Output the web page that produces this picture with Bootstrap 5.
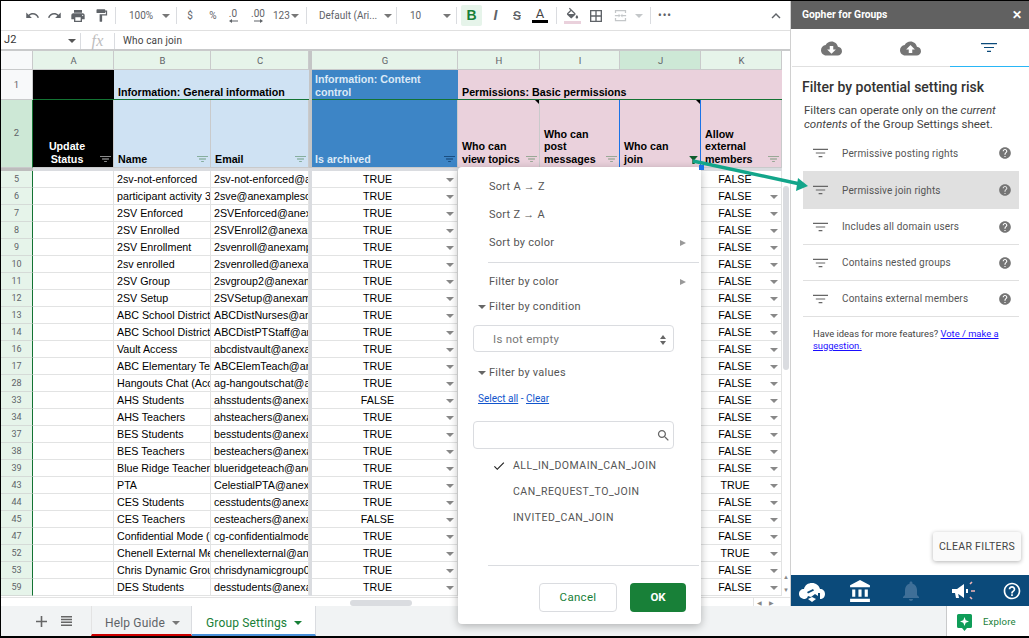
<!DOCTYPE html>
<html lang="en"><head><meta charset="utf-8"><title>Group Settings</title>
<link href="https://cdn.jsdelivr.net/npm/bootstrap@5.3.0/dist/css/bootstrap.min.css" rel="stylesheet">
<style>
html,body{margin:0;width:1029px;height:638px;overflow:hidden;background:#fff}
body{font-family:Roboto,"Liberation Sans",sans-serif;color:#444}
.pagewrap{width:1029px;height:638px}
.appframe{width:1029px;height:638px;border-top:1px solid #000;border-left:1px solid #000;border-bottom:2px solid #000}
.toprow{height:605px}
.leftpane{width:789px;flex:none}
.tbar{height:31px;border-bottom:1px solid #e0e0e0;padding-left:21px;font-size:10px;color:#5f6368}
.tbar svg{fill:#5f6368;display:block}
.ti{flex:none;display:flex;align-items:center;justify-content:center;height:22px}
.tl{justify-content:flex-start}
.tsep{flex:none;width:1px;height:17px;background:#dadce0}
.caret{display:inline-block;border-left:4px solid transparent;border-right:4px solid transparent;border-top:4px solid #777}
.w3{width:3px}.w8{width:8px}.w18{width:18px}.w20{width:20px}.w22{width:22px}.w24{width:24px}.w26{width:26px}.w28{width:28px}.w30{width:30px}.w33{width:33px}
.zoomb{width:60px;padding-left:13px;gap:9px}
.numb{gap:1px}
.fontb{width:89px;padding-left:12px;gap:7px}
.sizeb{width:59px;padding-left:13px;gap:22px}
.decb{flex-direction:column;line-height:9px;gap:1px}
.bbtn{width:21px;height:21px;margin-left:4px;background:#e6f4ea;color:#188038;font-weight:700;font-size:14px;border-radius:2px;font-family:"Liberation Sans",sans-serif}
.ibtn{width:25px;margin-left:1px;font-family:"Liberation Sans",sans-serif;font-style:italic;font-weight:700;font-size:14px}
.sbtn{font-size:13px;font-weight:500;text-decoration:line-through}
.abtn{width:28px;font-size:13px;line-height:12px;flex-direction:column;color:#444}
.abar{display:block;width:16px;height:3px;background:#000}
.fillbar{display:block;width:17px;height:3px;background:#ead1dc}
.fillb{flex-direction:column}
.ms2px{margin-left:2px}.ms7px{margin-left:7px}
.merge svg{fill:#c4c7c9}
.caretdim{border-top-color:#c4c7c9}
.dots{font-weight:700;font-size:10px;letter-spacing:1px}
.fbar{height:20px;padding-top:1px;border-bottom:2px solid #c9cacb;font-size:10px;color:#444;letter-spacing:.15px}
.fcell{width:79px;padding-left:3px;padding-right:4px;font-size:11px;color:#333}
.fcell .caret{border-top-color:#555}
.fdiv{width:1px;height:16px;background:#dadce0}
.fxlab{width:33px;text-align:center;font-family:"Liberation Serif",serif;font-style:italic;font-size:16px;color:#bdbdbd}
.fval{margin-left:8px}
.sgrid{table-layout:fixed;border-collapse:separate;border-spacing:0;width:781px;font-family:"Liberation Sans",Arial,sans-serif;font-size:10.7px;color:#000}
.c0{width:32px}.c1{width:81px}.c2{width:97px}.c3{width:98px}.c4{width:3px}.c5{width:146px}.c6{width:82px}.c7{width:80px}.c8{width:81px}.c9{width:81px}
.sgrid td,.sgrid th{padding:0 3px;white-space:nowrap;overflow:hidden;border-right:1px solid #e2e3e3;border-bottom:1px solid #e2e3e3;height:17px;line-height:15px;font-weight:400;position:relative}
.sgrid .rh{padding:0;text-align:center;font-family:Roboto,sans-serif;font-size:9px;color:#5f6368;background:#e6f4ea;border-right:1px solid #137333;border-bottom:1px solid #d5dbd7}
.sgrid .colh{height:19px;padding:0 0 0 1px;text-align:center;font-family:Roboto,sans-serif;font-size:9.5px;color:#5f6368;background:#e6f4ea;border-right:1px solid #c9cacb;border-bottom:1px solid #c9cacb}
.sgrid .colh.seldark{background:#cde8d6}
.sgrid .corner{background:#f8f9fa;border-right:1px solid #c9cacb;border-bottom:1px solid #c9cacb;padding:0}
.sgrid .fz{padding:0;background:#dadce0;border:0}
.sgrid .fz.fzh{background:#c4c5c6}
.sgrid .ctr{padding:0 14px 0 0;text-align:center}
.sgrid tr>.ctr:last-child{padding-right:12px}
.sgrid .ctr::after{content:"";position:absolute;right:3px;top:7px;border-left:4px solid transparent;border-right:4px solid transparent;border-top:4px solid #888}
.sgrid .ctr.nc::after{display:none}
.sgrid .r1 td,.sgrid .r1 th{height:30px;vertical-align:bottom;white-space:normal;font-weight:700;font-size:10.7px;line-height:13px;padding:0 3px 0 4px;border-right:0;border-bottom:1px solid #137333}
.sgrid .r1 .rh{background:#f8f9fa;font-weight:400;vertical-align:middle;border-right:1px solid #c9cacb;border-bottom:1px solid #c9cacb;font-size:9.5px;padding:0}
.sgrid .r2 td,.sgrid .r2 th{height:68px;vertical-align:bottom;font-weight:700;font-size:10.7px;line-height:12.5px;white-space:normal;padding:0 3px 2px 4px;border-right:1px solid #c9cacb;border-bottom:1px solid #c9cacb}
.sgrid .r1 td.bgg,.sgrid .r2 td.bgg{padding-left:3px}
.sgrid .r1 .fz,.sgrid .r2 .fz{padding:0;border:0}
.sgrid .r2 .rh{background:#cde8d6;font-weight:400;vertical-align:middle;border-right:1px solid #137333;font-size:9.5px;padding:0}
.sgrid .r3 td,.sgrid .r3 th{height:3px;padding:0;background:#dadce0;border:0;line-height:0;font-size:0}
.sgrid .r3 .rh{background:#bdbdbd}
.bgk{background:#000;color:#fff}
.sgrid .bgb{background:#cfe2f3}
.sgrid .bgg{background:#3d85c6;color:#dbe9f6}
.sgrid .bgp{background:#ead1dc}
.sgrid .r2 .bka{background:#000;color:#fff;text-align:center;padding-right:16px}
.ficon{position:absolute;right:2px;bottom:4px;display:block}
.sgrid .r2 .selL{border-right:1px solid #1a73e8}
.notec::before{content:"";position:absolute;top:0;right:0;border-top:4px solid #000;border-left:4px solid transparent}
.vtrack{width:8px;flex:none;position:relative}
.vthumb{width:6px;height:184px;background:#dadce0;border-radius:3px;margin:135px 0 0 1px}
.varr{height:13px;font-size:6px;text-align:center;color:#888;line-height:13px}
.hbar{height:9px;margin-top:1px;border-top:1px solid #e3e3e3}
.hthumb{width:62px;height:6px;background:#dadce0;border-radius:3px;margin:2px 0 0 349px}
.harr{margin-left:auto;margin-right:9px;font-size:6px;color:#888;letter-spacing:7px;line-height:9px;border-left:1px solid #e3e3e3;padding-left:3px}
.tabsbar{height:30px;background:#f1f3f4;font-size:12px;letter-spacing:.15px;color:#5f6368}
.addb{width:90px;padding-left:35px;gap:14px}
.sheettab{height:30px;padding:5px 0 0 14px;border-right:1px solid #dadce0;gap:7px;flex:none}
.sheettab.t1{width:101px;padding-left:13px;border-bottom:2px solid #c00;border-left:1px solid #e3e3e3}
.sheettab.t2{width:124px;background:#fff;color:#188038;border-bottom:2px solid #4a90d9}
.sheettab.t2 .caret{border-top-color:#188038}
.explore{margin-left:auto;width:83px;height:30px;background:#fff;border-left:1px solid #c9cacb;color:#188038;font-size:9.6px;padding:2px 0 0 10px;gap:11px}
.gpanel{width:239px;flex:none;border-left:1px solid #d0d0d0}
.ghead{height:28px;background:#616161;color:#fff;font-weight:700;font-size:10.3px;padding:0 7px 0 11px}
.gclose{font-size:12px;font-weight:700;line-height:1}
.gtabs{height:38px;border-bottom:1px solid #e0e0e0;margin-left:1px}
.gtab{height:38px}
.gtab.on{border-bottom:1px solid #29b6f6}
.gbody{padding:0 10px 0 12px;flex:1 1 0}
.gtitle{font-size:14px;font-weight:500;color:#333;margin:9px 0 0 -1px;line-height:22px}
.gtext{font-size:11.5px;line-height:14px;color:#444;margin:5px 0 4px 1px}
.glist{width:216px}
.glist .list-group-item{height:36px;padding:0 7px 0 10px;border:0;border-bottom:1px solid #e0e0e0;border-radius:0;font-size:10px;letter-spacing:.15px;color:#555;background:transparent}
.glist .list-group-item.first{border-bottom:0}
.glist .list-group-item.act{height:38px;background:#e0e0e0;border-bottom:0}
.glist .ltext{margin-left:14px}
.glist .list-group-item .hp{margin-left:auto;fill:#757575;flex:none}
.gnote{font-size:9.4px;line-height:12px;color:#444;margin:11px 0 0 10px}
.gnote a{color:#1a0dff}
.clearb{align-self:flex-end;width:88px;height:29px;padding:0;margin:auto -2px 14px 0;background:#fafafa;border:0;border-radius:3px;font-size:10.5px;letter-spacing:.3px;color:#444;box-shadow:0 1px 4px rgba(0,0,0,.3)}
.gfoot{height:31px;background:#0b4a7a;padding:0 0 0 7px}
.fi2{margin-left:22px}.fi3{margin-left:27px}.fi4{margin-left:28px}.fi5{margin-left:27px}
.fpop{position:absolute;left:458px;top:167px;width:243px;height:457px;background:#fff;border-radius:4px;box-shadow:0 2px 8px rgba(0,0,0,.28);padding-top:5px;font-size:11px;letter-spacing:.25px;color:#555}
.pitem{height:28px;padding:2px 15px 0 31px}
.pline{height:1px;background:#dadce0;margin-left:30px;margin-right:2px}
.pl1{margin-top:6px;margin-bottom:4px}
.pl2{margin-top:35px}
.tri{width:0;border-top:3px solid transparent;border-bottom:3px solid transparent;border-left:6px solid #999;margin-left:auto}
.psub{height:22px;padding:2px 0 0 20px;gap:3px}
.psub.gap9{margin-top:9px}
.psub .caret{border-top-color:#666}
.pselect{width:201px;height:27px;margin:8px 0 0 15px;border:1px solid #dadce0;border-radius:4px;padding:2px 7px 0 19px;font-size:11.5px;color:#777}
.updown{display:flex;flex-direction:column;gap:2px;margin-left:auto}
.updown i{display:block;border-left:3px solid transparent;border-right:3px solid transparent}
.updown i.u{border-bottom:4px solid #666}
.updown i.d{border-top:4px solid #666}
.plinks{height:20px;margin-top:5px;padding-left:20px;font-size:10px;letter-spacing:0;color:#1155cc}
.plinks a{color:#1155cc}
.psearch{width:201px;height:28px;margin:13px 0 3px 15px;border:1px solid #dadce0;border-radius:4px;padding-right:2px}
.pval{height:26px;padding:2px 0 0 55px;font-size:10.5px;letter-spacing:.5px;color:#555;position:relative}
.pval svg{position:absolute;left:34px;top:7px}
.pbtns{margin-top:17px;padding-right:15px;gap:13px}
.bcancel{width:78px;height:29px;padding:0;border:1px solid #dadce0;border-radius:4px;background:#fff;font-size:11.5px;color:#188038;font-weight:400;letter-spacing:.3px}
.bok{width:56px;height:29px;padding:0;border:0;border-radius:4px;background:#188038;color:#fff;font-size:11.5px;font-weight:700}
.bhandle{position:absolute;left:699px;top:165px;width:5px;height:5px;background:#1a73e8;z-index:3}
.jmark{position:absolute;left:689px;top:156px;z-index:3}
.arrowsv{position:absolute;left:0;top:0;z-index:4;pointer-events:none}
</style></head><body>
<svg width="0" height="0" class="position-absolute"><defs>
<symbol id="flt" viewBox="0 0 16 10"><path d="M0 .5h16v1.2H0zM3 4.400h10v1.200H3zM6 8.300h4v1.200H6z"/></symbol>
<symbol id="hlp" viewBox="0 0 24 24"><path d="M12 2C6.480 2 2 6.480 2 12s4.480 10 10 10 10-4.480 10-10S17.520 2 12 2zm1 17h-2v-2h2v2zm2.070-7.750l-.9.92C13.450 12.900 13 13.500 13 15h-2v-.5c0-1.100.45-2.100 1.170-2.830l1.240-1.260c.37-.36.59-.86.59-1.410 0-1.100-.9-2-2-2s-2 .9-2 2H8c0-2.210 1.790-4 4-4s4 1.790 4 4c0 .88-.36 1.680-.93 2.250z"/></symbol>
</defs></svg>
<div class="pagewrap position-relative">
<div class="appframe d-flex flex-column">
<div class="d-flex toprow">
<div class="leftpane d-flex flex-column">
<div class="tbar d-flex align-items-center">
<span class="ti w20"><svg width="15" height="15" viewBox="0 0 24 24"><path d="M12.500 8c-2.650 0-5.050.99-6.900 2.600L2 7v9h9l-3.620-3.620c1.390-1.160 3.160-1.880 5.120-1.880 3.540 0 6.550 2.310 7.600 5.500l2.370-.78C21.080 11.030 17.150 8 12.500 8z"/></svg></span>
<span class="ti w24"><svg width="15" height="15" viewBox="0 0 24 24"><path d="M18.400 10.600C16.550 8.990 14.150 8 11.500 8c-4.650 0-8.580 3.030-9.960 7.220L3.900 16c1.050-3.190 4.050-5.500 7.600-5.500 1.950 0 3.730.72 5.120 1.880L13 16h9V7l-3.600 3.600z"/></svg></span>
<span class="ti w24"><svg width="16" height="16" viewBox="0 0 24 24"><path d="M19 8H5c-1.660 0-3 1.340-3 3v6h4v4h12v-4h4v-6c0-1.660-1.340-3-3-3zm-3 11H8v-5h8v5zm3-7c-.55 0-1-.45-1-1s.45-1 1-1 1 .45 1 1-.45 1-1 1zm-1-9H6v4h12V3z"/></svg></span>
<span class="ti w22"><svg width="15" height="15" viewBox="0 0 24 24"><path d="M18 4V3c0-.55-.45-1-1-1H5c-.55 0-1 .45-1 1v4c0 .55.45 1 1 1h12c.55 0 1-.45 1-1V6h1v4H9v11c0 .55.45 1 1 1h2c.55 0 1-.45 1-1v-9h8V4h-3z"/></svg></span>
<span class="ti w3"></span><span class="tsep"></span>
<span class="ti tl zoomb">100%<i class="caret"></i></span><span class="tsep"></span>
<span class="ti w26">$</span><span class="ti w20">%</span>
<span class="ti w20 decb">.0<svg width="9" height="4" viewBox="0 0 9 4"><path d="M0 2l3-2v1.500h6v1H3V4z"/></svg></span>
<span class="ti w30 decb">.00<svg width="9" height="4" viewBox="0 0 9 4"><path d="M9 2L6 0v1.500H0v1h6V4z"/></svg></span>
<span class="ti tl w33 numb">123<i class="caret"></i></span><span class="tsep"></span>
<span class="ti tl fontb">Default (Ari...<i class="caret"></i></span><span class="tsep"></span>
<span class="ti tl sizeb">10<i class="caret"></i></span><span class="tsep"></span>
<span class="ti bbtn">B</span>
<span class="ti ibtn">I</span>
<span class="ti w18 sbtn">S</span>
<span class="ti abtn">A<i class="abar"></i></span>
<span class="tsep ms2px"></span>
<span class="ti w30 fillb"><svg width="15" height="14" viewBox="0 0 24 20"><path d="M16.560 8.940L7.620 0 6.210 1.410l2.380 2.380-5.150 5.150c-.59.59-.59 1.540 0 2.120l5.500 5.500c.29.29.68.44 1.060.44s.77-.15 1.060-.44l5.500-5.500c.59-.58.59-1.530 0-2.120zM5.210 10L10 5.210 14.790 10H5.210zM19 11.500s-2 2.170-2 3.500c0 1.100.9 2 2 2s2-.9 2-2c0-1.330-2-3.500-2-3.500z"/></svg><i class="fillbar"></i></span>
<span class="ti w18"><svg width="16" height="16" viewBox="0 0 24 24"><path d="M3 3v18h18V3H3zm8 16H5v-6h6v6zm0-8H5V5h6v6zm8 8h-6v-6h6v6zm0-8h-6V5h6v6z"/></svg></span>
<span class="ti w30 merge"><svg width="15" height="15" viewBox="0 0 24 24"><path d="M3 3h18v5h-2V5H5v3H3zM3 16h2v3h14v-3h2v5H3zM3 11h6V9l3 3-3 3v-2H3zM21 11h-6V9l-3 3 3 3v-2h6z"/></svg></span>
<span class="ti w8"><i class="caret caretdim"></i></span>
<span class="tsep ms7px"></span>
<span class="ti w28 dots">&#8226;&#8226;&#8226;</span>
<span class="ti ms-auto w28"><svg width="18" height="18" viewBox="0 0 24 24"><path d="M7.410 15.410L12 10.830l4.590 4.580L18 14l-6-6-6 6z"/></svg></span>
</div>
<div class="fbar d-flex align-items-center">
<span class="fcell d-flex align-items-center justify-content-between">J2<i class="caret"></i></span>
<span class="fdiv"></span><span class="fxlab">fx</span><span class="fdiv"></span>
<span class="fval">Who can join</span>
</div>
<div class="d-flex">
<table class="sgrid">
<colgroup><col class="c0"><col class="c1"><col class="c2"><col class="c3"><col class="c4"><col class="c5"><col class="c6"><col class="c7"><col class="c8"><col class="c9"></colgroup>
<tr><td class="corner"></td><td class="colh">A</td><td class="colh">B</td><td class="colh">C</td><td class="fz fzh"></td><td class="colh">G</td><td class="colh">H</td><td class="colh">I</td><td class="colh seldark">J</td><td class="colh">K</td></tr>
<tr class="r1"><th class="rh">1</th><td class="bgk"></td><td class="bgb" colspan="2">Information: General information</td><td class="fz fzh"></td><td class="bgg">Information: Content control</td><td class="bgp" colspan="4">Permissions: Basic permissions</td></tr>
<tr class="r2"><th class="rh">2</th>
<td class="bka">Update Status<svg class="ficon" width="11" height="8" fill="#bbb"><use href="#flt"/></svg></td>
<td class="bgb">Name<svg class="ficon" width="11" height="8" fill="#6f9d83"><use href="#flt"/></svg></td>
<td class="bgb">Email<svg class="ficon" width="11" height="8" fill="#6f9d83"><use href="#flt"/></svg></td>
<td class="fz fzh"></td>
<td class="bgg">Is archived<svg class="ficon" width="11" height="8" fill="#0f3d6b"><use href="#flt"/></svg></td>
<td class="bgp notec">Who can<br>view topics<svg class="ficon" width="11" height="8" fill="#7f9a7f"><use href="#flt"/></svg></td>
<td class="bgp selL">Who can<br>post<br>messages<svg class="ficon" width="11" height="8" fill="#7f9a7f"><use href="#flt"/></svg></td>
<td class="bgp notec selL">Who can<br>join</td>
<td class="bgp">Allow<br>external<br>members<svg class="ficon" width="11" height="8" fill="#7f9a7f"><use href="#flt"/></svg></td></tr>
<tr class="r3"><td class="rh"></td><td colspan="3"></td><td></td><td></td><td colspan="4"></td></tr>
<tr><th class="rh">5</th><td></td><td>2sv-not-enforced</td><td>2sv-not-enforced@anexample.com</td><td class="fz"></td><td class="ctr">TRUE</td><td></td><td></td><td></td><td class="ctr nc">FALSE</td></tr>
<tr><th class="rh">6</th><td></td><td>participant activity 3 group</td><td>2sve@anexamplesch.com</td><td class="fz"></td><td class="ctr">TRUE</td><td></td><td></td><td></td><td class="ctr">FALSE</td></tr>
<tr><th class="rh">7</th><td></td><td>2SV Enforced</td><td>2SVEnforced@anexample.com</td><td class="fz"></td><td class="ctr">TRUE</td><td></td><td></td><td></td><td class="ctr">FALSE</td></tr>
<tr><th class="rh">8</th><td></td><td>2SV Enrolled</td><td>2SVEnroll2@anexample.com</td><td class="fz"></td><td class="ctr">TRUE</td><td></td><td></td><td></td><td class="ctr">FALSE</td></tr>
<tr><th class="rh">9</th><td></td><td>2SV Enrollment</td><td>2svenroll@anexample.com</td><td class="fz"></td><td class="ctr">TRUE</td><td></td><td></td><td></td><td class="ctr">FALSE</td></tr>
<tr><th class="rh">10</th><td></td><td>2sv enrolled</td><td>2svenrolled@anexample.com</td><td class="fz"></td><td class="ctr">TRUE</td><td></td><td></td><td></td><td class="ctr">FALSE</td></tr>
<tr><th class="rh">11</th><td></td><td>2SV Group</td><td>2svgroup2@anexample.com</td><td class="fz"></td><td class="ctr">TRUE</td><td></td><td></td><td></td><td class="ctr">FALSE</td></tr>
<tr><th class="rh">12</th><td></td><td>2SV Setup</td><td>2SVSetup@anexample.com</td><td class="fz"></td><td class="ctr">TRUE</td><td></td><td></td><td></td><td class="ctr">FALSE</td></tr>
<tr><th class="rh">13</th><td></td><td>ABC School District Nurses</td><td>ABCDistNurses@anexample.com</td><td class="fz"></td><td class="ctr">TRUE</td><td></td><td></td><td></td><td class="ctr">FALSE</td></tr>
<tr><th class="rh">14</th><td></td><td>ABC School District PT Staff</td><td>ABCDistPTStaff@anexample.com</td><td class="fz"></td><td class="ctr">TRUE</td><td></td><td></td><td></td><td class="ctr">FALSE</td></tr>
<tr><th class="rh">16</th><td></td><td>Vault Access</td><td>abcdistvault@anexample.com</td><td class="fz"></td><td class="ctr">TRUE</td><td></td><td></td><td></td><td class="ctr">FALSE</td></tr>
<tr><th class="rh">17</th><td></td><td>ABC Elementary Teachers</td><td>ABCElemTeach@anexample.com</td><td class="fz"></td><td class="ctr">TRUE</td><td></td><td></td><td></td><td class="ctr">FALSE</td></tr>
<tr><th class="rh">28</th><td></td><td>Hangouts Chat (Accounts)</td><td>ag-hangoutschat@anexample.com</td><td class="fz"></td><td class="ctr">TRUE</td><td></td><td></td><td></td><td class="ctr">FALSE</td></tr>
<tr><th class="rh">33</th><td></td><td>AHS Students</td><td>ahsstudents@anexample.com</td><td class="fz"></td><td class="ctr">FALSE</td><td></td><td></td><td></td><td class="ctr">FALSE</td></tr>
<tr><th class="rh">34</th><td></td><td>AHS Teachers</td><td>ahsteachers@anexample.com</td><td class="fz"></td><td class="ctr">TRUE</td><td></td><td></td><td></td><td class="ctr">FALSE</td></tr>
<tr><th class="rh">37</th><td></td><td>BES Students</td><td>besstudents@anexample.com</td><td class="fz"></td><td class="ctr">TRUE</td><td></td><td></td><td></td><td class="ctr">FALSE</td></tr>
<tr><th class="rh">38</th><td></td><td>BES Teachers</td><td>besteachers@anexample.com</td><td class="fz"></td><td class="ctr">TRUE</td><td></td><td></td><td></td><td class="ctr">FALSE</td></tr>
<tr><th class="rh">39</th><td></td><td>Blue Ridge Teachers</td><td>blueridgeteach@anexample.com</td><td class="fz"></td><td class="ctr">TRUE</td><td></td><td></td><td></td><td class="ctr">FALSE</td></tr>
<tr><th class="rh">43</th><td></td><td>PTA</td><td>CelestialPTA@anexample.com</td><td class="fz"></td><td class="ctr">TRUE</td><td></td><td></td><td></td><td class="ctr">TRUE</td></tr>
<tr><th class="rh">44</th><td></td><td>CES Students</td><td>cesstudents@anexample.com</td><td class="fz"></td><td class="ctr">TRUE</td><td></td><td></td><td></td><td class="ctr">FALSE</td></tr>
<tr><th class="rh">45</th><td></td><td>CES Teachers</td><td>cesteachers@anexample.com</td><td class="fz"></td><td class="ctr">FALSE</td><td></td><td></td><td></td><td class="ctr">FALSE</td></tr>
<tr><th class="rh">47</th><td></td><td>Confidential Mode (test)</td><td>cg-confidentialmode@anexample.com</td><td class="fz"></td><td class="ctr">TRUE</td><td></td><td></td><td></td><td class="ctr">FALSE</td></tr>
<tr><th class="rh">52</th><td></td><td>Chenell External Members</td><td>chenellexternal@anexample.com</td><td class="fz"></td><td class="ctr">TRUE</td><td></td><td></td><td></td><td class="ctr">TRUE</td></tr>
<tr><th class="rh">53</th><td></td><td>Chris Dynamic Group</td><td>chrisdynamicgroup01@anexample.com</td><td class="fz"></td><td class="ctr">TRUE</td><td></td><td></td><td></td><td class="ctr">FALSE</td></tr>
<tr><th class="rh">59</th><td></td><td>DES Students</td><td>desstudents@anexample.com</td><td class="fz"></td><td class="ctr">TRUE</td><td></td><td></td><td></td><td class="ctr">FALSE</td></tr>
</table>
<div class="vtrack d-flex flex-column"><div class="vthumb"></div><div class="mt-auto"><div class="varr">&#9650;</div><div class="varr">&#9660;</div></div></div>
</div>
<div class="hbar d-flex"><div class="hthumb"></div><div class="harr">&#9664;&#9654;</div></div>
</div>
<aside class="gpanel d-flex flex-column">
<div class="ghead d-flex align-items-center justify-content-between"><span>Gopher for Groups</span><span class="gclose">&#10005;</span></div>
<div class="gtabs row g-0">
<div class="col-4 gtab d-flex align-items-center justify-content-center"><svg width="21" height="21" viewBox="0 0 24 24" fill="#757575"><path d="M19.350 10.040C18.670 6.590 15.640 4 12 4 9.110 4 6.600 5.640 5.350 8.040 2.340 8.360 0 10.910 0 14c0 3.310 2.690 6 6 6h13c2.760 0 5-2.240 5-5 0-2.640-2.050-4.780-4.650-4.960zM17 13l-5 5-5-5h3V9h4v4h3z"/></svg></div>
<div class="col-4 gtab d-flex align-items-center justify-content-center"><svg width="21" height="21" viewBox="0 0 24 24" fill="#757575"><path d="M19.350 10.040C18.670 6.590 15.640 4 12 4 9.110 4 6.600 5.640 5.350 8.040 2.340 8.360 0 10.910 0 14c0 3.310 2.690 6 6 6h13c2.760 0 5-2.240 5-5 0-2.640-2.050-4.780-4.650-4.960zM14 13v4h-4v-4H7l5-5 5 5h-3z"/></svg></div>
<div class="col-4 gtab on d-flex align-items-center justify-content-center"><svg width="16" height="11" fill="#0b4a7a"><use href="#flt"/></svg></div>
</div>
<div class="gbody d-flex flex-column">
<h1 class="gtitle">Filter by potential setting risk</h1>
<p class="gtext">Filters can operate only on the <em>current contents</em> of the Group Settings sheet.</p>
<div class="list-group glist">
<div class="list-group-item first d-flex align-items-center"><svg width="15" height="10" fill="#666"><use href="#flt"/></svg><span class="ltext">Permissive posting rights</span><svg class="hp" width="14" height="14"><use href="#hlp"/></svg></div>
<div class="list-group-item act d-flex align-items-center"><svg width="15" height="10" fill="#666"><use href="#flt"/></svg><span class="ltext">Permissive join rights</span><svg class="hp" width="14" height="14"><use href="#hlp"/></svg></div>
<div class="list-group-item d-flex align-items-center"><svg width="15" height="10" fill="#666"><use href="#flt"/></svg><span class="ltext">Includes all domain users</span><svg class="hp" width="14" height="14"><use href="#hlp"/></svg></div>
<div class="list-group-item d-flex align-items-center"><svg width="15" height="10" fill="#666"><use href="#flt"/></svg><span class="ltext">Contains nested groups</span><svg class="hp" width="14" height="14"><use href="#hlp"/></svg></div>
<div class="list-group-item d-flex align-items-center"><svg width="15" height="10" fill="#666"><use href="#flt"/></svg><span class="ltext">Contains external members</span><svg class="hp" width="14" height="14"><use href="#hlp"/></svg></div>
</div>
<p class="gnote">Have ideas for more features? <a href="#">Vote / make a suggestion.</a></p>
<button type="button" class="btn clearb">CLEAR FILTERS</button>
</div>
<div class="gfoot d-flex align-items-center">
<svg width="28" height="24" viewBox="0 0 28 24" fill="#fff"><path d="M7 20C3 20 1 17.500 1 15c0-3 2-5 5-5 1-4 4-6 8-6 4 0 7 2.500 8 6 3 0 5 2 5 5s-2 5-5 5h-2v-3l-3-2-4 3-3-1-1 2z"/><path d="M10 20l4 3 4-3-4-2z"/><path d="M9 13l6-3 1 1.500-6 3z" fill="#0b4a7a"/><rect x="20" y="14" width="2" height="6" fill="#0b4a7a"/></svg>
<svg class="fi2" width="24" height="24" viewBox="0 0 23 23" fill="#fff"><path d="M4 10v7h3v-7H4zm6 0v7h3v-7h-3zM2 22h19v-3H2v3zm14-12v7h3v-7h-3zm-4.500-9L2 6v2h19V6l-9.500-5z"/></svg>
<svg class="fi3" width="24" height="24" viewBox="0 0 24 24" fill="#3f6f98"><path d="M12 22c1.100 0 2-.9 2-2h-4c0 1.100.89 2 2 2zm6-6v-5c0-3.070-1.640-5.640-4.500-6.320V4c0-.83-.67-1.500-1.500-1.500s-1.500.67-1.500 1.500v.68C7.630 5.360 6 7.920 6 11v5l-2 2v1h16v-1l-2-2z"/></svg>
<svg class="fi4" width="24" height="20" viewBox="0 0 24 20"><path d="M1 8h5l7-5v14l-7-5H1zM4 12h3l1 5H5z" fill="#fff"/><path d="M15 8h2v4h-2z" fill="#fff"/><path d="M19 3l2-2M20 10h4M19 16l2 2" stroke="#f4b6b6" stroke-width="1.600"/></svg>
<svg class="fi5" width="20" height="20" viewBox="0 0 24 24" fill="#fff"><path d="M11 18h2v-2h-2v2zm1-16C6.480 2 2 6.480 2 12s4.480 10 10 10 10-4.480 10-10S17.520 2 12 2zm0 18c-4.410 0-8-3.590-8-8s3.590-8 8-8 8 3.590 8 8-3.590 8-8 8zm0-14c-2.210 0-4 1.790-4 4h2c0-1.100.9-2 2-2s2 .9 2 2c0 2-3 1.750-3 5h2c0-2.250 3-2.500 3-5 0-2.210-1.790-4-4-4z"/></svg>
</div>
</aside>
</div>
<div class="tabsbar d-flex align-items-center">
<div class="addb d-flex align-items-center"><svg width="11" height="11" viewBox="0 0 11 11" fill="#666"><path d="M4.700 0h1.600v4.700H11v1.600H6.300V11H4.700V6.300H0V4.700h4.700z"/></svg><svg width="11" height="10" viewBox="0 0 11 10" fill="#666"><path d="M0 0h11v1.500H0zM0 2.800h11v1.500H0zM0 5.600h11v1.500H0zM0 8.400h11v1.500H0z"/></svg></div>
<div class="sheettab t1 d-flex align-items-center">Help Guide<i class="caret"></i></div>
<div class="sheettab t2 d-flex align-items-center">Group Settings<i class="caret"></i></div>
<div class="explore d-flex align-items-center"><svg width="15" height="17" viewBox="0 0 15 17"><path d="M1.500 0h12A1.500 1.500 0 0 1 15 1.500v11a1.500 1.500 0 0 1-1.500 1.500H10l-2.500 3L5 14H1.500A1.500 1.500 0 0 1 0 12.500v-11A1.500 1.500 0 0 1 1.500 0z" fill="#0f9d58"/><path d="M7.500 3l1.200 3.300L12 7.500 8.700 8.700 7.500 12 6.300 8.700 3 7.500l3.300-1.200z" fill="#fff"/></svg><span>Explore</span></div>
</div>
</div>

<div class="fpop">
<div class="pitem d-flex align-items-center">Sort A &#8594; Z</div>
<div class="pitem d-flex align-items-center">Sort Z &#8594; A</div>
<div class="pitem d-flex align-items-center">Sort by color<i class="tri"></i></div>
<div class="pline pl1"></div>
<div class="pitem d-flex align-items-center">Filter by color<i class="tri"></i></div>
<div class="psub d-flex align-items-center"><i class="caret"></i>Filter by condition</div>
<div class="pselect d-flex align-items-center">Is not empty<span class="updown"><i class="u"></i><i class="d"></i></span></div>
<div class="psub gap9 d-flex align-items-center"><i class="caret"></i>Filter by values</div>
<div class="plinks d-flex align-items-center"><a href="#">Select all</a>&nbsp;-&nbsp;<a href="#">Clear</a></div>
<div class="psearch d-flex align-items-center justify-content-end"><svg width="15" height="15" viewBox="0 0 24 24" fill="#666"><path d="M15.500 14h-.79l-.28-.27C15.410 12.590 16 11.110 16 9.500 16 5.910 13.090 3 9.500 3S3 5.910 3 9.500 5.910 16 9.500 16c1.610 0 3.090-.59 4.230-1.570l.27.28v.79l5 4.990L20.490 19l-4.990-5zm-6 0C7.010 14 5 11.990 5 9.500S7.010 5 9.500 5 14 7.010 14 9.500 11.990 14 9.500 14z"/></svg></div>
<div class="pval d-flex align-items-center"><svg width="14" height="14" viewBox="0 0 24 24" fill="#222"><path d="M9 16.170L4.830 12l-1.410 1.410L9 19 21 7l-1.410-1.410z"/></svg>ALL_IN_DOMAIN_CAN_JOIN</div>
<div class="pval d-flex align-items-center">CAN_REQUEST_TO_JOIN</div>
<div class="pval d-flex align-items-center">INVITED_CAN_JOIN</div>
<div class="pline pl2"></div>
<div class="pbtns d-flex justify-content-end"><button type="button" class="btn bcancel">Cancel</button><button type="button" class="btn bok">OK</button></div>
</div>
<svg class="jmark" width="9" height="8" viewBox="0 0 11 10"><path d="M0 0h11L7 4.500V10H4V4.500z" fill="#0f5c2c"/></svg>
<div class="bhandle"></div>
<svg class="arrowsv" width="1029" height="638"><path d="M693 161L800 184" stroke="#12a58a" stroke-width="3.500"/><path d="M808 186L798 178 796 191z" fill="#12a58a"/></svg>
</div>
<script src="https://cdn.jsdelivr.net/npm/bootstrap@5.3.0/dist/js/bootstrap.bundle.min.js"></script>
</body></html>
